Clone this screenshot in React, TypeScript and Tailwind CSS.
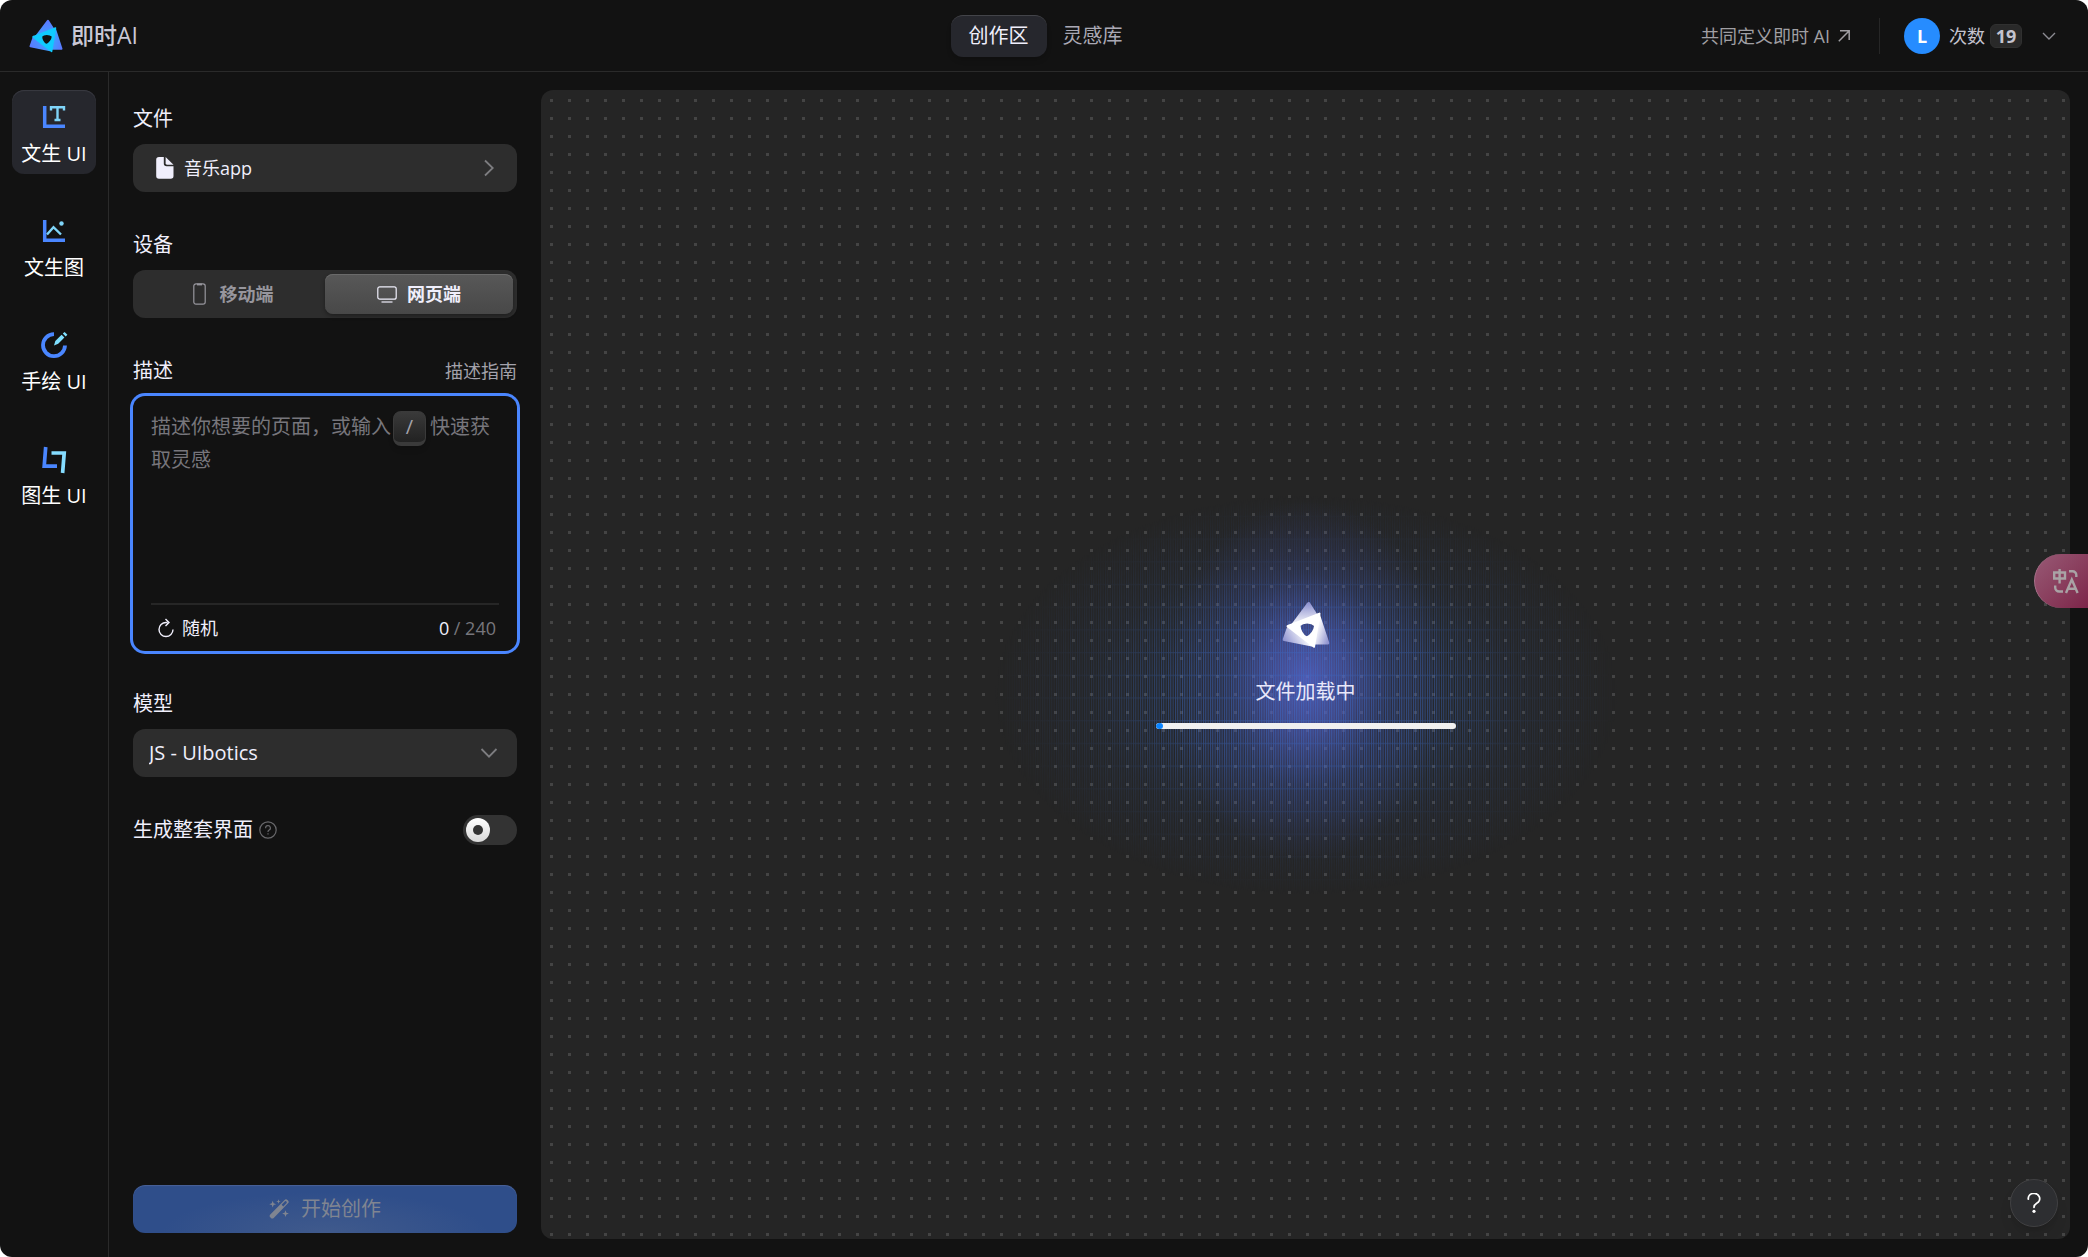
import { useState } from "react";
import type { ReactNode } from "react";

const NAV = ["创作区", "灵感库"];

function Logo({ mono = false, className }: { mono?: boolean; className?: string }) {
  const id = mono ? "logo-mono" : "logo-color";
  const from = mono ? "#ffffff" : "#3fa0ff";
  const to = mono ? "#8f93d0" : "#5b78ff";
  const front = mono ? "#ffffff" : "#10cbff";

  return (
    <svg viewBox="0 0 48 48" className={className} aria-hidden="true">
      <defs>
        <linearGradient id={`${id}-a`} x1="0.6" y1="1" x2="0.6" y2="0">
          <stop offset="0" stopColor={from} />
          <stop offset="1" stopColor={to} />
        </linearGradient>
        <linearGradient id={`${id}-b`} x1="0" y1="0.3" x2="1" y2="1">
          <stop offset="0.2" stopColor={from} />
          <stop offset="1" stopColor={to} />
        </linearGradient>
        <linearGradient id={`${id}-c`} x1="1" y1="0.4" x2="0" y2="0.8">
          <stop offset="0.2" stopColor={from} />
          <stop offset="1" stopColor={to} />
        </linearGradient>
      </defs>
      <g strokeWidth="3" strokeLinejoin="round">
        <path d="M26.7 2.5 34 14 10 25Z" fill={`url(#${id}-a)`} stroke={`url(#${id}-a)`} />
        <path d="M36.5 14 45.8 42 32 42Z" fill={`url(#${id}-b)`} stroke={`url(#${id}-b)`} />
        <path d="M7 25 2.2 38.5 30 44Z" fill={`url(#${id}-c)`} stroke={`url(#${id}-c)`} />
      </g>
      <path
        fill={front}
        stroke={front}
        strokeWidth="2"
        strokeLinejoin="round"
        fillRule="evenodd"
        d="M5.5 25.2 37.5 12.6 32 45.8Z M17.6 24.4c0 4.600 3 10.500 7 12 4.600-1.800 8.200-7.400 8.600-12-4-3.800-12.200-4-15.600 0Z"
      />
    </svg>
  );
}

function TextUiIcon() {
  return (
    <>
      <path d="M5.7 4V24.3H26" stroke="#4a86ff" strokeWidth="3.5" />
      <path d="M12 8.5V5.2H25V8.5M18.5 5.2V18M15.5 18H21.5" stroke="#7fd4f8" strokeWidth="2.4" />
    </>
  );
}

function TextImageIcon() {
  return (
    <>
      <path d="M5.7 4V24.3H26" stroke="#4a86ff" strokeWidth="3.5" />
      <path d="M8 18.5 14.5 11.2 22 18.5" stroke="#7fd4f8" strokeWidth="2.4" />
      <circle cx="22.5" cy="7.5" r="2.2" fill="#7fd4f8" />
    </>
  );
}

function SketchIcon() {
  return (
    <>
      <path d="M15 4.2A11 11 0 1 0 26 15.5" stroke="#4a86ff" strokeWidth="3.8" />
      <path d="M15 15.4 16.3 11 22.6 4.7 25.4 7.5 19.2 13.8Z" fill="#7fe0ff" />
      <path d="M23.800 3.600 25.600 2 28.400 4.800 26.700 6.500Z" fill="#7fe0ff" />
    </>
  );
}

function ImageUiIcon() {
  return (
    <>
      <path d="M6.7 3 5.2 22.2H18" stroke="#4a86ff" strokeWidth="3.7" />
      <path d="M12.5 9H25.2L23.6 29" stroke="#85dcff" strokeWidth="3.7" />
    </>
  );
}

const TOOLS: { label: string; icon: ReactNode }[] = [
  { label: "文生 UI", icon: <TextUiIcon /> },
  { label: "文生图", icon: <TextImageIcon /> },
  { label: "手绘 UI", icon: <SketchIcon /> },
  { label: "图生 UI", icon: <ImageUiIcon /> },
];

function Header() {
  return (
    <header className="grid h-[72px] shrink-0 grid-cols-[1fr_auto_1fr] items-center border-b border-[#2a2a2a] pr-8 pl-[29px]">
      <a href="#" className="flex items-center gap-2 text-[23px] font-medium text-[#c9c8d6]">
        <Logo className="size-[34px]" />
        即时AI
      </a>

      <nav className="ml-1 flex text-xl text-[#aaa9b5]">
        {NAV.map((item, i) => (
          <a
            key={item}
            href="#"
            className={
              i === 0
                ? "flex h-[42px] items-center rounded-xl border-t border-[#434449] bg-[#26272d] px-[18px] text-[#f0effc] shadow-md"
                : "flex h-[42px] items-center px-4"
            }
          >
            {item}
          </a>
        ))}
      </nav>

      <div className="flex items-center justify-end text-lg">
        <a href="#" className="flex items-center gap-2 text-[#a09fa3]">
          共同定义即时 AI
          <svg viewBox="0 0 12 12" className="size-3" fill="none" stroke="currentColor" strokeWidth="1.5" aria-hidden="true">
            <path d="M2 .8H11.2V10M11 1 .8 11.2" />
          </svg>
        </a>
        <span className="mr-6 ml-[29px] h-9 w-px bg-[#262626]" />
        <button type="button" className="flex items-center text-[#c4c3cf]">
          <span className="flex size-9 items-center justify-center rounded-full bg-[#268cff] font-bold text-white">
            L
          </span>
          <span className="ml-[9px]">次数</span>
          <span className="ml-[5px] flex h-6 w-8 items-center justify-center rounded-md border border-[#303030] bg-[#292929] font-bold">
            19
          </span>
          <svg viewBox="0 0 14 8" className="ml-5 h-2 w-3.5" fill="none" stroke="#8c8b92" strokeWidth="1.4" aria-hidden="true">
            <path d="M1 1 7 7 13 1" />
          </svg>
        </button>
      </div>
    </header>
  );
}

function Sidebar() {
  return (
    <aside className="flex w-[109px] shrink-0 flex-col gap-[30px] border-r border-[#2a2a2a] px-3 pt-[18px]">
      {TOOLS.map((tool, i) => (
        <button
          key={tool.label}
          type="button"
          className={
            i === 0
              ? "flex size-[84px] flex-col items-center gap-[7px] rounded-xl bg-[#26272d] pt-3 text-xl text-white shadow-[inset_0_1px_1px_#3a3b42]"
              : "flex size-[84px] flex-col items-center gap-[7px] rounded-xl pt-3 text-xl text-white"
          }
        >
          <svg viewBox="0 0 30 30" className="size-[30px] shrink-0" fill="none" aria-hidden="true">
            {tool.icon}
          </svg>
          <span className="leading-[30px] whitespace-nowrap">{tool.label}</span>
        </button>
      ))}
    </aside>
  );
}

function DeviceSwitch() {
  const [device, setDevice] = useState("web");

  return (
    <fieldset className="mt-[38px]">
      <legend className="mb-2.5 text-xl leading-[30px]">设备</legend>
      <div className="grid h-12 grid-cols-2 rounded-xl bg-[#2d2d2d] p-1 text-lg font-bold">
        <label className="flex items-center justify-center gap-3.5 rounded-lg pl-1 text-[#97969d] has-checked:bg-linear-to-b has-checked:from-[#585858] has-checked:to-[#484848] has-checked:text-[#f0effc] has-checked:shadow-[0_2px_4px_#00000055,inset_0_1px_0_#6a6a6a]">
          <input
            type="radio"
            name="device"
            className="sr-only"
            checked={device === "mobile"}
            onChange={() => setDevice("mobile")}
          />
          <svg viewBox="0 0 13 22" className="h-[22px] w-[13px]" fill="none" stroke="currentColor" strokeWidth="1.2" aria-hidden="true">
            <rect x=".8" y=".8" width="11.4" height="20.4" rx="2.2" />
            <path d="M4 1.5H9" strokeWidth="1.8" />
          </svg>
          移动端
        </label>
        <label className="flex items-center justify-center gap-2.5 rounded-lg text-[#97969d] has-checked:bg-linear-to-b has-checked:from-[#585858] has-checked:to-[#484848] has-checked:text-[#f0effc] has-checked:shadow-[0_2px_4px_#00000055,inset_0_1px_0_#6a6a6a]">
          <input
            type="radio"
            name="device"
            className="sr-only"
            checked={device === "web"}
            onChange={() => setDevice("web")}
          />
          <svg viewBox="0 0 20 17" className="h-[17px] w-5" fill="none" stroke="currentColor" strokeWidth="1.2" aria-hidden="true">
            <rect x=".8" y=".8" width="18.4" height="12.4" rx="2" />
            <path d="M4.5 16H15.5" />
          </svg>
          网页端
        </label>
      </div>
    </fieldset>
  );
}

function Prompt() {
  const [text, setText] = useState("");

  return (
    <section className="mt-[38px]">
      <div className="mb-2.5 flex items-center justify-between leading-[30px]">
        <label htmlFor="prompt" className="text-xl leading-[30px]">
          描述
        </label>
        <a href="#" className="text-lg leading-[30px] text-[#a3a2ab]">
          描述指南
        </a>
      </div>
      <div className="relative h-[255px] rounded-xl px-[18px] ring-3 ring-[#4a86ff]">
        <textarea
          id="prompt"
          maxLength={240}
          value={text}
          onChange={(e) => setText(e.target.value)}
          className="block h-[207px] w-full resize-none bg-transparent pt-3.5 text-xl leading-[33px] outline-none"
        />
        {!text && (
          <p className="pointer-events-none absolute inset-x-[18px] top-3.5 text-xl leading-[33px] text-[#77767c]">
            描述你想要的页面，或输入
            <kbd className="-my-2 mr-1 ml-0.5 inline-flex h-[35px] w-[33px] items-center justify-center rounded-lg border border-b-4 border-[#3a3a3a] bg-linear-to-b from-[#3a3a3a] to-[#222222] align-middle font-[inherit] text-xl leading-none font-normal text-[#a3a2ab] shadow-md">
              /
            </kbd>
            快速获取灵感
          </p>
        )}
        <div className="flex h-12 items-center justify-between border-t-2 border-[#262626] pr-[3px] pl-[7px] text-lg">
          <button type="button" className="flex items-center gap-2">
            <svg viewBox="0 0 16 20" className="h-5 w-4" fill="none" stroke="currentColor" strokeWidth="1.4" aria-hidden="true">
              <path d="M9.5 4.5H8A7 7 0 1 0 15 11.5M7.5 1 11 4.5 7.5 8" />
            </svg>
            随机
          </button>
          <span className="text-[#77767c]">
            <span className="text-[#f0effc]">0</span> / 240
          </span>
        </div>
      </div>
    </section>
  );
}

function Panel() {
  return (
    <form className="flex w-[432px] shrink-0 flex-col px-6 pt-8 pb-6 text-[#f0effc]">
      <h2 className="mb-2.5 text-xl leading-[30px]">文件</h2>
      <button type="button" className="flex h-12 items-center rounded-xl bg-[#2d2d2d] px-[23px] text-lg">
        <svg viewBox="0 0 18 22" className="mr-2.5 h-[22px] w-[18px]" fill="currentColor" aria-hidden="true">
          <path d="M3 0H7.8V6.5A2.8 2.8 0 0 0 10.6 9.3H17.5V19A2.8 2.8 0 0 1 14.7 21.8H3A2.8 2.8 0 0 1 .2 19V2.8A2.8 2.8 0 0 1 3 0Z" />
          <path d="M9.6 0 17.5 7.7H11A1.4 1.4 0 0 1 9.6 6.3Z" />
        </svg>
        音乐app
        <svg viewBox="0 0 10 18" className="ml-auto h-[18px] w-2.5" fill="none" stroke="#7d7d80" strokeWidth="1.8" aria-hidden="true">
          <path d="M1 1.5 8.8 9 1 16.5" />
        </svg>
      </button>

      <DeviceSwitch />
      <Prompt />

      <label htmlFor="model" className="mt-[38px] mb-2.5 text-xl leading-[30px]">
        模型
      </label>
      <div className="relative">
        <select id="model" className="h-12 w-full appearance-none rounded-xl bg-[#2d2d2d] px-4 text-xl outline-none">
          <option>JS - UIbotics</option>
        </select>
        <svg viewBox="0 0 18 10" className="pointer-events-none absolute top-[19px] right-[19px] h-2.5 w-[18px]" fill="none" stroke="#7d7d80" strokeWidth="1.8" aria-hidden="true">
          <path d="M1.5 1 9 8.6 16.5 1" />
        </svg>
      </div>

      <label className="mt-[38px] flex h-[30px] items-center text-xl">
        生成整套界面
        <svg viewBox="0 0 18 18" className="ml-1.5 size-[18px]" fill="none" stroke="#68686b" strokeWidth="1.2" aria-hidden="true">
          <circle cx="9" cy="9" r="8.2" />
          <path d="M6.6 7.2A2.4 2.4 0 1 1 9.8 9.3C9.2 9.6 9 10 9 10.9M9 12.3V13.6" />
        </svg>
        <input type="checkbox" className="peer sr-only" />
        <span className="ml-auto flex h-[30px] w-[54px] items-center rounded-full bg-[#333333] px-[3px] peer-checked:justify-end peer-checked:bg-[#4a86ff]">
          <span className="flex size-6 items-center justify-center rounded-full bg-linear-to-b from-white to-[#d8d8d8]">
            <span className="size-2.5 rounded-full bg-[#333333]" />
          </span>
        </span>
      </label>

      <button
        type="button"
        className="mt-auto flex h-12 items-center justify-center gap-3 rounded-xl bg-[#2f4e8a] bg-radial-[ellipse_at_bottom] from-[#405a8c] to-[#2f4e8a] to-60% text-xl text-[#808591] shadow-[inset_0_1px_1px_#4a6297]"
      >
        <svg viewBox="0 0 20 20" className="size-5" fill="currentColor" aria-hidden="true">
          <path
            fillRule="evenodd"
            d="M15.6.9a2 2 0 0 1 2.8 0l.6.6a2 2 0 0 1 0 2.8L4.700 18.900a2 2 0 0 1-2.800 0l-.6-.6a2 2 0 0 1 0-2.800ZM12.600 5.700 14.300 7.400 17.700 4 17.800 2.900 16.900 2.100 16 2.300Z"
          />
          <path d="M3.7 1.8 4.6 4.3 7.1 5.2 4.6 6.1 3.7 8.6 2.8 6.1.3 5.2 2.8 4.3ZM9.5.2 10.1 1.9 11.8 2.5 10.1 3.1 9.5 4.8 8.9 3.1 7.2 2.5 8.9 1.9ZM16.5 11.2 17.4 13.7 19.9 14.6 17.4 15.5 16.5 18 15.6 15.5 13.1 14.6 15.6 13.7Z" />
        </svg>
        开始创作
      </button>
    </form>
  );
}

function Glow() {
  return (
    <svg
      viewBox="0 0 640 480"
      className="pointer-events-none absolute top-1/2 left-1/2 h-[480px] w-[640px] -translate-1/2"
      aria-hidden="true"
    >
      <defs>
        <radialGradient id="core">
          <stop offset="0" stopColor="#646be0" stopOpacity="0.72" />
          <stop offset="0.3" stopColor="#5a60cc" stopOpacity="0.52" />
          <stop offset="0.6" stopColor="#4a52b0" stopOpacity="0.2" />
          <stop offset="1" stopColor="#4a52b0" stopOpacity="0" />
        </radialGradient>
        <radialGradient id="halo">
          <stop offset="0" stopColor="#fff" stopOpacity="0.6" />
          <stop offset="0.4" stopColor="#fff" stopOpacity="0.5" />
          <stop offset="0.7" stopColor="#fff" stopOpacity="0.17" />
          <stop offset="1" stopColor="#fff" stopOpacity="0" />
        </radialGradient>
        <mask id="halo-mask">
          <ellipse cx="320" cy="270" rx="312" ry="200" fill="url(#halo)" />
        </mask>
        <pattern id="stripes" width="2.333" height="22.7" patternUnits="userSpaceOnUse">
          <rect width="1" height="22.7" fill="#3c6fd0" />
          <rect width="2.333" height="1.2" fill="#3c6fd0" fillOpacity="0.6" />
        </pattern>
      </defs>
      <ellipse cx="320" cy="256" rx="140" ry="180" fill="url(#core)" />
      <rect width="640" height="480" fill="url(#stripes)" mask="url(#halo-mask)" />
    </svg>
  );
}

function Canvas() {
  return (
    <main className="relative m-[18px] ml-0 flex flex-1 items-center justify-center overflow-hidden rounded-xl bg-[#252525]">
      <svg className="absolute inset-0 size-full" aria-hidden="true">
        <defs>
          <pattern id="dots" width="18" height="18" patternUnits="userSpaceOnUse">
            <rect x="9" y="9" width="3" height="3" fill="#444444" />
          </pattern>
        </defs>
        <rect width="100%" height="100%" fill="url(#dots)" />
      </svg>

      <div className="relative flex flex-col items-center">
        <Glow />
        <Logo mono className="relative size-12" />
        <p className="relative mt-7 text-xl leading-[30px] text-[#e9e8fa]">文件加载中</p>
        <div
          role="progressbar"
          aria-label="文件加载中"
          aria-valuenow={2}
          className="relative mt-4 h-1.5 w-[300px] overflow-hidden rounded-full bg-[#f0f0f0]"
        >
          <div className="h-full w-[7px] rounded-full bg-[#0a84ff]" />
        </div>
      </div>

      <button
        type="button"
        aria-label="帮助"
        className="absolute right-3 bottom-3 flex size-12 items-center justify-center rounded-full border border-[#414143] bg-[#2d2e31] text-white shadow-lg"
      >
        <svg viewBox="0 0 14 20" className="h-5 w-3.5" fill="none" stroke="currentColor" strokeWidth="1.8" strokeLinecap="round" aria-hidden="true">
          <path d="M1.3 6.2A5.7 5.3 0 1 1 9.7 10.3C7.7 11.5 7 12.3 7 14.3" />
          <circle cx="7" cy="18.3" r="1.6" fill="currentColor" stroke="none" />
        </svg>
      </button>
    </main>
  );
}

function TranslateButton() {
  return (
    <button
      type="button"
      aria-label="翻译"
      className="absolute top-[554px] right-0 flex h-[54px] w-[54px] items-center rounded-l-full border-l border-[#a8718a] bg-linear-to-br from-[#985a76] to-[#7c2449] pl-[17px]"
    >
      <svg viewBox="0 0 28 26" className="h-[26px] w-7" fill="none" stroke="#a9a3a5" strokeWidth="2.4" aria-hidden="true">
        <path d="M2.200 4.500H13V10.500H2.200ZM7.600 1V15.500" />
        <path d="M14 25 19.800 11.500 25.600 25M16 20.800H23.600" />
        <path d="M17 3.200H20.500A3.800 3.800 0 0 1 24.300 7V9M3.200 17.500V19.500A4 4 0 0 0 7.200 23.500H11" />
      </svg>
    </button>
  );
}

export default function App() {
  return (
    <div className="bg-white font-['Open_Sans','Noto_Sans_CJK_SC',sans-serif]">
      <div className="relative flex min-h-screen flex-col overflow-hidden rounded-xl bg-[#121212]">
        <Header />
        <div className="flex flex-1">
          <Sidebar />
          <Panel />
          <Canvas />
        </div>
        <TranslateButton />
      </div>
    </div>
  );
}
